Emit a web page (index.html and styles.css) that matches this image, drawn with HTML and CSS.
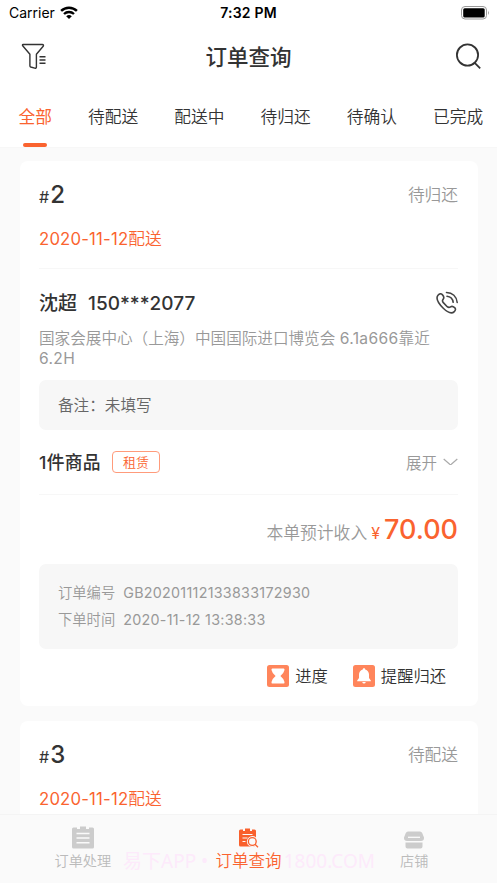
FILE: index.html
```html
<!DOCTYPE html>
<html lang="zh-CN">
<head>
<meta charset="utf-8">
<meta name="viewport" content="width=device-width, initial-scale=1">
<title>订单查询</title>
<link rel="stylesheet" href="styles.css">
</head>
<body>
<div class="app">
  <header class="top">
    <div class="status">
      <div class="carrier">Carrier
        <svg width="18" height="14" viewBox="0 0 18 14"><path d="M1.1 4.9a11.4 11.4 0 0 1 15.8 0" fill="none" stroke="#000" stroke-width="2.5"/><path d="M4 8a7.2 7.2 0 0 1 10 0" fill="none" stroke="#000" stroke-width="2.3"/><path d="M6.2 10.2a4.2 4.2 0 0 1 5.6 0L9 13z"/></svg>
      </div>
      <time class="clock">7:32 PM</time>
      <svg class="battery" width="29" height="14" viewBox="0 0 29 14"><rect x=".5" y=".5" width="25" height="12.5" rx="3.5" fill="none" stroke="#999"/><rect x="2.2" y="2.2" width="21.5" height="9.2" rx="1.5"/><path d="M27 4.5q1.5 2.2 0 4.5z" fill="#888"/></svg>
    </div>
    <div class="titlebar">
      <svg width="26" height="28" viewBox="0 0 26 28" fill="none" stroke="#333" stroke-width="1.4" stroke-linejoin="round"><path d="M2.2 1.500h19.200c1 0 1.400 1 .8 1.800l-6.800 8V24c0 1-.8 1.400-1.700 1.100l-4-1.100c-.6-.2-.8-.6-.8-1.200V11.300l-6.800-8C1.200 2.500 1.200 1.500 2.200 1.500z"/><path d="M18.500 13.700h6M18.500 17h6M18.500 20.200h6"/></svg>
      <h1 class="title">订单查询</h1>
      <svg width="27" height="27" viewBox="0 0 27 27" fill="none" stroke="#333" stroke-width="1.8"><circle cx="12.5" cy="12" r="10.6"/><path d="M19.2 19.4l6 6"/></svg>
    </div>
    <nav class="tabs">
      <span class="tab on">全部</span><span class="tab">待配送</span><span class="tab">配送中</span><span class="tab">待归还</span><span class="tab">待确认</span><span class="tab">已完成</span>
    </nav>
  </header>
  <main class="list">
    <article class="card">
      <div class="head"><div class="num"><small>#</small>2</div><span class="state">待归还</span></div>
      <div class="date"><span>2020-11-12</span>配送</div>
      <div class="customer"><span class="person">沈超<b>150***2077</b></span>
        <svg width="24" height="24" viewBox="0 0 24 24" fill="none" stroke="#444" stroke-width="1.6" stroke-linecap="round" stroke-linejoin="round"><path d="M3 4.2C4.4 2.7 6 2.3 7.3 3.6c1.3 1.4 2 3 1 4.3-1.2 1.5-1.3 2.1-.2 3.5l4.1 4.3c1.3 1.1 2.1 1 3.4.1 1.4-1 2.7-.4 4 .8 1.3 1.2 1.1 2.6-.3 4-3.1 3-7.3.3-11-3.3C4.600 13.600 0 8 3 4.200z"/><path d="M11.500 1.500c6 .1 10 4 10.700 10M12 5.300c3.500.4 5.700 2.600 6.200 6"/></svg>
      </div>
      <p class="address">国家会展中心（上海）中国国际进口博览会 <span>6.1a666</span>靠近 <span>6.2H</span></p>
      <div class="note">备注：未填写</div>
      <div class="goods"><strong>1件商品</strong><span class="tag">租赁</span><span class="expand">展开<svg width="15" height="9" viewBox="0 0 15 9" fill="none" stroke="#aaa" stroke-width="1.2"><path d="M.7 1l6 5.200q.8.6 1.600 0l6-5.200"/></svg></span></div>
      <div class="income">本单预计收入<i>¥</i><b>70.00</b></div>
      <div class="meta"><div><span>订单编号</span><b>GB20201112133833172930</b></div><div><span>下单时间</span><b>2020-11-12 13:38:33</b></div></div>
      <div class="actions">
        <span class="action"><svg width="22" height="22" viewBox="0 0 22 22"><rect width="22" height="22" rx="2.500" fill="#ff855b"/><path d="M5.300 3.500h11.400q1 0 .8 1.500-.6 3.200-4.100 6 3.500 2.800 4.100 6 .2 1.500-.8 1.500H5.300q-1 0-.8-1.500.6-3.200 4.100-6-3.500-2.800-4.100-6-.2-1.500.8-1.500z" fill="#fff"/></svg>进度</span>
        <span class="action"><svg width="22" height="22" viewBox="0 0 22 22"><rect width="22" height="22" rx="2.500" fill="#ff855b"/><path d="M11 3.200c.8 0 1.200.5 1.200 1.200 2.500.7 3.800 2.700 3.800 5.200v3.500l1.800 2.300v.8H4.200v-.8L6 13.100V9.600c0-2.500 1.300-4.500 3.800-5.200 0-.7.4-1.200 1.200-1.200zM9.200 17h3.600q-.4 1.600-1.800 1.600T9.200 17z" fill="#fff"/></svg>提醒归还</span>
      </div>
    </article>
    <article class="card">
      <div class="head"><div class="num"><small>#</small>3</div><span class="state">待配送</span></div>
      <div class="date"><span>2020-11-12</span>配送</div>
    </article>
  </main>
  <footer class="bottom">
    <div class="item"><svg width="22" height="23" viewBox="0 0 22 23"><path d="M1.500 1.500H5V3h3V.500h6V3h3V1.500h3.500q1.500 0 1.500 1.500v18q0 1.500-1.500 1.500h-19Q0 22.500 0 21V3q0-1.500 1.500-1.500z" fill="#ccc"/><path d="M4.500 7.500h13M4.500 12h13M4.500 16.800h13" stroke="#fafafa" stroke-width="1.500"/></svg><span>订单处理</span></div>
    <div class="item active"><svg width="20" height="20" viewBox="0 0 20 20"><path d="M1.500 1.500H4V3h2V.500h5V3h2V1.500h2.500q1.500 0 1.500 1.500v14q0 1.500-1.500 1.500h-14Q0 18.500 0 17V3q0-1.500 1.500-1.500z" fill="#f9602c"/><path d="M3.500 6.500h10M3.500 10h5M3.500 13.500h3" stroke="#fafafa" stroke-width="1.200"/><circle cx="13.300" cy="13.500" r="5.400" fill="#fafafa"/><path d="M16 16.200l3 3" stroke="#fafafa" stroke-width="4"/><circle cx="13.300" cy="13.500" r="3.900" fill="none" stroke="#f9602c" stroke-width="1.300"/><path d="M16 16.200l3 3" stroke="#f9602c" stroke-width="1.300"/></svg><span>订单查询</span></div>
    <div class="item"><svg width="20" height="18" viewBox="0 0 20 18"><path d="M4 .5h12q1.500 0 2.200 1.600L20 6.500q.2 3.500-3 3.500H3Q-.2 10 0 6.500l1.800-4.400Q2.500.5 4 .5zM1.500 11.400h17v4q0 2-2 2h-13q-2 0-2-2z" fill="#ccc"/><path d="M4 6.300h12" stroke="#fafafa" stroke-width="1.300"/></svg><span>店铺</span></div>
    <div class="watermark"><span>易下APP •</span><span>1800.COM</span></div>
  </footer>
</div>
</body>
</html>
```
FILE: styles.css
```css
* { box-sizing: border-box; }
body { margin: 0; background: #fafafa; color: #333; font-family: Inter, "Noto Sans CJK SC", sans-serif; }
svg { display: block; flex: none; }
.app { height: 883px; display: flex; flex-direction: column; overflow: hidden; }
.top { height: 148px; flex: none; background: #fff; border-bottom: 1px solid #f7f7f7; }
.status { height: 25px; display: grid; grid-template-columns: 1fr auto 1fr; align-items: center; padding: 0 7px 0 9px; color: #000; font-size: 14px; }
.carrier { display: flex; align-items: center; gap: 6px; margin-right: 1px; }
.carrier svg { margin-left: -1px; }
.clock { font-weight: 600; letter-spacing: .2px; margin-left: -2px; }
.battery { justify-self: end; }
.titlebar { height: 62px; display: flex; align-items: center; justify-content: space-between; padding: 1px 15px 0 21px; }
.title { margin: 1px 5px 0 0; font-size: 21.500px; font-weight: 500; line-height: 30px; }
.tabs { height: 60px; display: flex; gap: 36.200px; padding-left: 18.500px; font-size: 16.700px; font-weight: 350; white-space: nowrap; }
.tab { flex: none; display: flex; flex-direction: column; align-items: center; height: 60px; line-height: 60px; }
.on { color: #fa632f; font-weight: 400; }
.on::after { content: ""; width: 24px; height: 4px; flex: none; border-radius: 2px; background: #fa632f; margin-top: -4px; }
.list { flex: 1; min-height: 0; overflow: hidden; padding: 13px 19px 0 20px; }
.card { height: 545px; background: #fff; border-radius: 8px; padding: 18px 20px 0 19px; margin-bottom: 15px; }
.head { display: flex; justify-content: space-between; align-items: center; height: 32px; }
.num { font-size: 24px; font-weight: 500; line-height: 32px; padding-top: 2px; }
.num small { font-size: 16px; font-weight: 400; margin-right: 1px; }
.state { color: #999; font-size: 16.700px; font-weight: 350; line-height: 24px; margin-bottom: 1px; }
.date { margin-top: 15px; height: 43px; line-height: 27px; font-size: 16.700px; font-weight: 350; color: #fa632f; border-bottom: 1px solid #f7f7f7; }
.date span { font-weight: 400; letter-spacing: .2px; }
.customer { margin-top: 16px; height: 36px; display: flex; align-items: center; justify-content: space-between; font-size: 19px; font-weight: 500; }
.customer svg { margin-right: -1px; }
.person { line-height: 28px; padding-top: 1px; }
.customer b { font-weight: 500; margin-left: 11px; }
.address { margin: 8px 0 0; font-size: 15.600px; line-height: 20px; font-weight: 350; color: #999; width: 410px; }
.address span { font-weight: 400; letter-spacing: .35px; }
.note { margin-top: 11px; height: 50px; line-height: 52px; padding-left: 19px; border-radius: 7px; background: #f7f7f7; color: #666; font-size: 15.600px; font-weight: 350; }
.goods { height: 65px; border-bottom: 1px solid #f7f7f7; display: flex; align-items: center; }
.goods strong { font-size: 17.800px; font-weight: 500; line-height: 26px; padding-top: 1px; letter-spacing: .3px; }
.tag { margin-left: 11px; width: 48px; height: 22px; line-height: 21px; border: 1px solid #ff9b7b; border-radius: 4px; color: #fa632f; font-size: 13px; font-weight: 350; text-align: center; }
.expand { margin-left: auto; display: flex; align-items: center; gap: 6px; color: #999; font-size: 15.500px; font-weight: 350; }
.income { height: 69px; display: flex; align-items: baseline; justify-content: flex-end; line-height: 70px; font-size: 16.800px; font-weight: 350; color: #999; }
.income i { font-style: normal; font-size: 16px; margin: 0 4px; color: #fa632f; font-weight: 400; }
.income b { font-size: 27px; font-weight: 500; color: #fa632f; }
.meta { height: 85px; padding: 16px 19px; border-radius: 7px; background: #f7f7f7; color: #999; font-size: 14.300px; font-weight: 350; line-height: 26.500px; }
.meta b { font-weight: 400; letter-spacing: .28px; }
.meta span { margin-right: 8px; }
.actions { height: 53px; display: flex; align-items: center; justify-content: flex-end; gap: 25px; padding-right: 12px; font-size: 16.300px; font-weight: 350; line-height: 22px; }
.action { display: flex; align-items: center; gap: 6px; }
.bottom { position: relative; height: 69px; flex: none; display: grid; grid-template-columns: repeat(3, 1fr); background: #fafafa; border-top: 1px solid #f4f4f4; }
.item { display: grid; grid-template-rows: 34px 24px; justify-items: center; align-items: end; color: #bbb; font-size: 14.200px; font-weight: 350; line-height: 24px; }
.active { color: #fa632f; font-size: 16.500px; font-weight: 350; }
.active svg { margin: 0 0 1px 1px; }
.watermark { position: absolute; left: 123px; top: 34px; width: 252px; display: flex; justify-content: space-between; color: #fdeafb; font: 19px/24px "Noto Sans", "Noto Sans CJK SC", sans-serif; }
```
